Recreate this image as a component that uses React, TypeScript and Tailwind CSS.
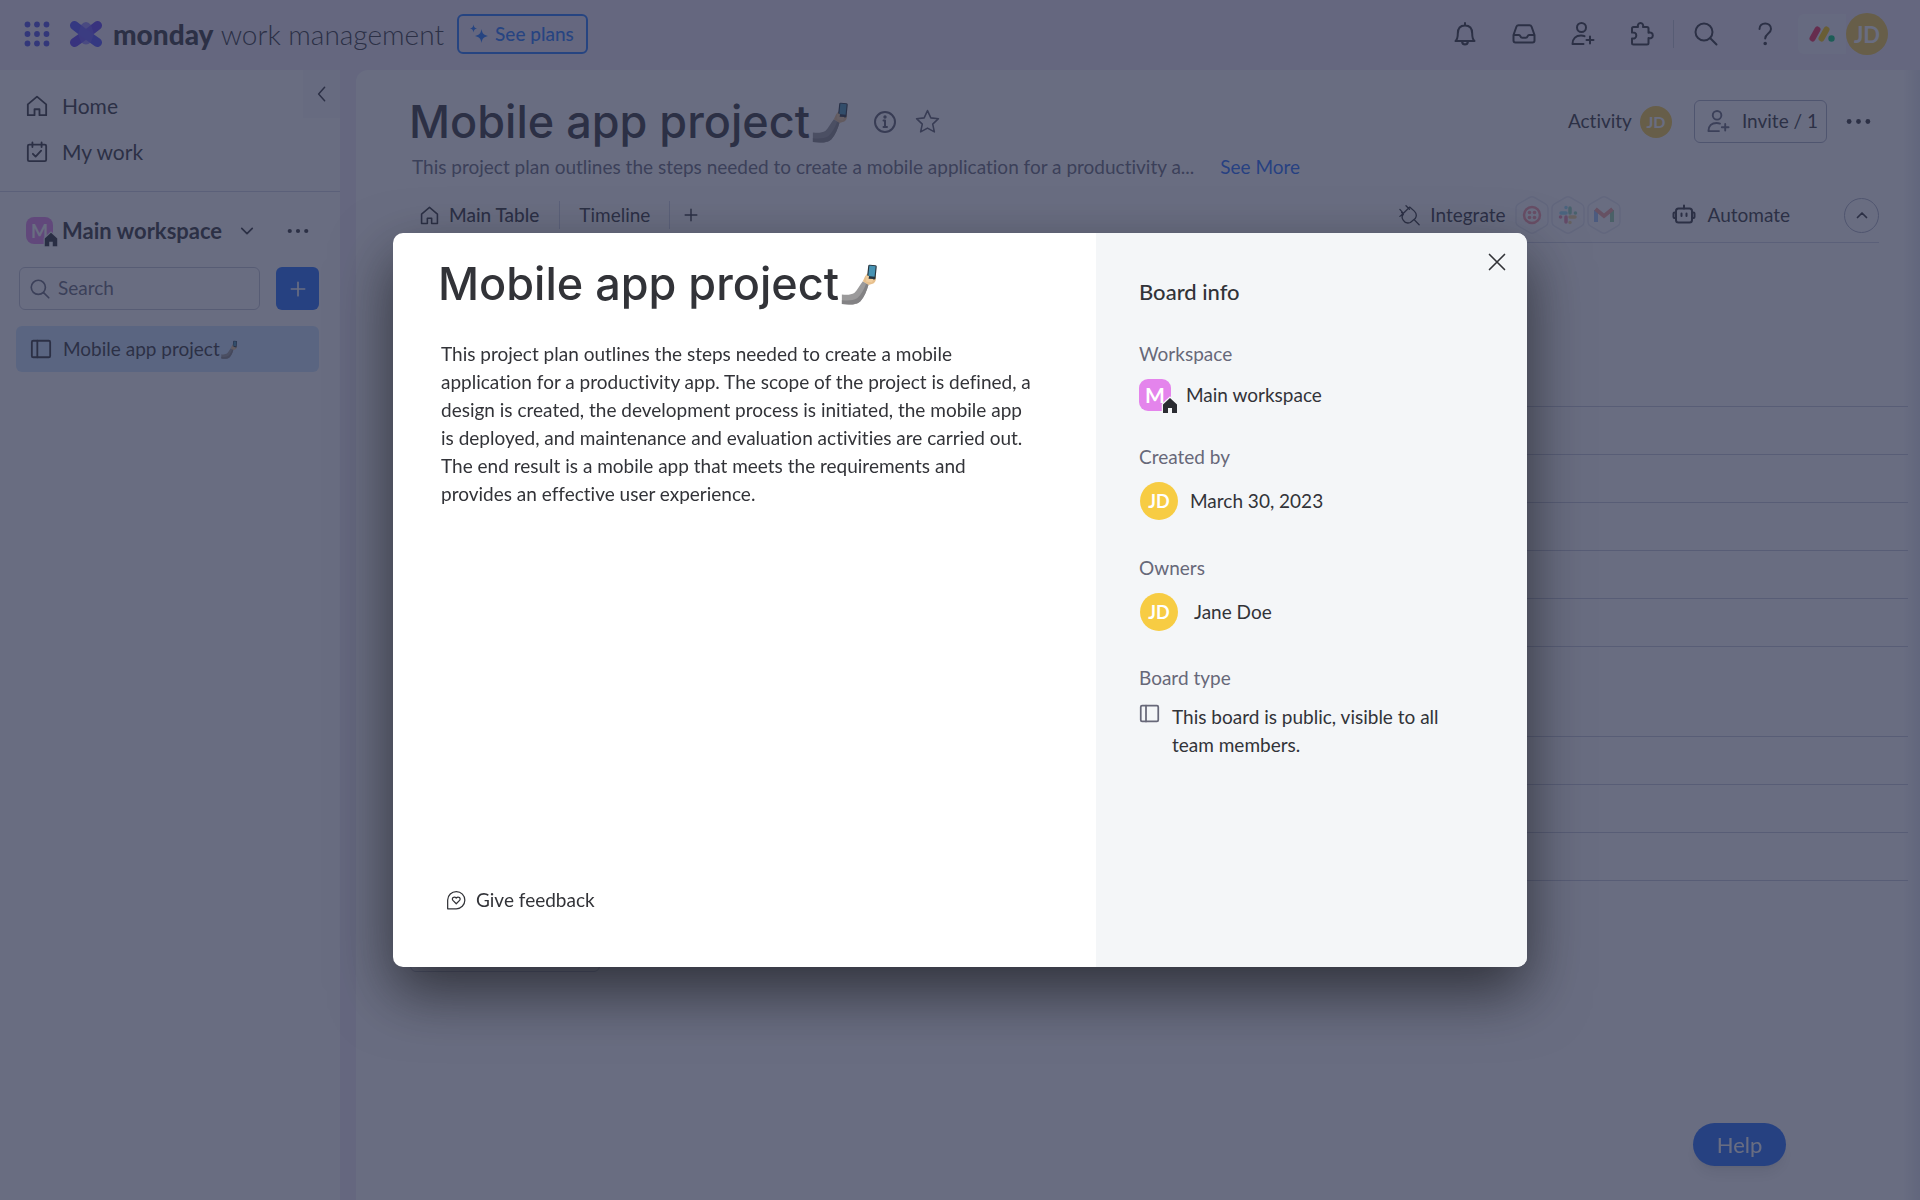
import React, { useState } from 'react';

interface IconProps {
  className?: string;
  size?: number;
  strokeWidth?: number;
  children?: React.ReactNode;
}

// All line icons share one 24px grid
const Icon: React.FC<IconProps> = ({ className = '', size = 24, strokeWidth = 2, children }) => (
  <svg
    width={size}
    height={size}
    viewBox="0 0 24 24"
    fill="none"
    stroke="currentColor"
    strokeWidth={strokeWidth}
    strokeLinecap="round"
    strokeLinejoin="round"
    className={`shrink-0 ${className}`}
    aria-hidden="true"
  >
    {children}
  </svg>
);

const HomeIcon: React.FC<IconProps> = (props) => (
  <Icon {...props}>
    <path d="M2 10.200 12 1.800l10 8.400V22h-7.300v-6.500H9.300V22H2z" />
  </Icon>
);

const MyWorkIcon: React.FC<IconProps> = (props) => (
  <Icon {...props}>
    <rect x="2" y="4" width="20" height="18" rx="1.500" />
    <path d="M7 1.500v5M17 1.500v5M7.500 14l3 3 6-6.500" />
  </Icon>
);

const BoardIcon: React.FC<IconProps> = (props) => (
  <Icon {...props}>
    <rect x="2" y="3" width="20" height="18" rx="1.500" />
    <path d="M8 3v18" />
  </Icon>
);

const SearchIcon: React.FC<IconProps> = (props) => (
  <Icon {...props}>
    <circle cx="10" cy="10" r="8.500" />
    <path d="m16.300 16.300 6.200 6.200" />
  </Icon>
);

const PersonAddIcon: React.FC<IconProps> = (props) => (
  <Icon {...props}>
    <circle cx="10.500" cy="5.500" r="4.500" />
    <path d="M12.500 22H1.500c0-5.500 3.500-8.500 8.500-8.500 1.500 0 2.500.2 3.500.7M19 14.500v7M15.500 18h7" />
  </Icon>
);

const BellIcon: React.FC<IconProps> = (props) => (
  <Icon {...props}>
    <path d="M2.500 19h19c-1.800-1.600-2.300-3.500-2.300-7.500C19.200 6.500 16.500 3.500 12 3.500s-7.200 3-7.200 8c0 4-.5 5.900-2.300 7.500zM12 3.500V1M9 19.500c.3 2 1.300 3 3 3s2.700-1 3-3" />
  </Icon>
);

const InboxIcon: React.FC<IconProps> = (props) => (
  <Icon {...props}>
    <path d="M1.500 13 4.500 4.500Q5 3.200 6.500 3.200h11q1.500 0 2 1.300l3 8.500v5.500q0 2-2 2h-17q-2 0-2-2zM1.500 13H7c.8 0 1 .4 1.300 1.200.4 1.100 1 1.600 2 1.600h3.400c1 0 1.600-.5 2-1.600.3-.8.5-1.200 1.300-1.200h5.500" />
  </Icon>
);

const PuzzleIcon: React.FC<IconProps> = (props) => (
  <Icon {...props}>
    <path d="M2 6.500q0-1.500 1.500-1.500H8C7.300 2.800 8.500 1 10.500 1S13.700 2.800 13 5h4q1.500 0 1.500 1.500v4.300c2.300-.8 4.300.4 4.300 2.600s-2 3.400-4.300 2.600v5q0 1.500-1.500 1.500H3.500Q2 22.500 2 21v-4.500c2.800.4 4.300-.9 4.300-3S4.800 10.100 2 10.500z" />
  </Icon>
);

const DotsIcon: React.FC<IconProps> = ({ size = 24 }) => (
  <svg width={size} height={size} viewBox="0 0 24 24" fill="currentColor" aria-hidden="true">
    <circle cx="3" cy="12" r="2.300" />
    <circle cx="12" cy="12" r="2.300" />
    <circle cx="21" cy="12" r="2.300" />
  </svg>
);

const SelfieEmoji: React.FC<{ size: number }> = ({ size }) => (
  <svg width={size} height={size} viewBox="0 0 40 44" className="shrink-0" role="img" aria-label="selfie">
    <path d="M1 33c5 .8 10 .4 13-1.500 3-3 5.500-8 9-12.500l6 3.500c-2 7-4.500 13-8.500 17.500C17 44 8 43.800 1 43z" fill="#9b9a9b" />
    <path d="M1 39c7 .8 12 .2 16-2 4-3.500 7-9 9.500-15.500l2.500 1c-2 7-4.500 13-8.500 17.500C17 44 8 43.800 1 43z" fill="#838284" />
    <path d="M23 19c1.500-3 2.500-6.500 5-8l8 1c1.500 3.500 1 7.500-2 9.500l-5 1.500z" fill="#e7c08d" />
    <rect x="28" y="2" width="9" height="15" rx="1.500" transform="rotate(6 32 9)" fill="#26333d" />
    <rect x="29.200" y="3" width="6.600" height="11" transform="rotate(6 32 9)" fill="#4793b3" />
    <path d="M26.500 12.500l3 1.500-.5 2.500 5 .3-1.500 3.500-6-1z" fill="#f0cd9e" />
  </svg>
);

const WorkspaceBadge: React.FC<{ large?: boolean }> = ({ large }) => (
  <span
    className={`relative flex shrink-0 items-center justify-center bg-[#e484ec] font-bold text-white ${
      large ? 'h-8 w-8 rounded-[9px] text-[21px]' : 'h-[27px] w-[27px] rounded-lg text-lg'
    }`}
  >
    M
    <svg
      viewBox="0 0 18 19"
      className={`absolute ${large ? '-right-2 -bottom-1 h-[19px] w-[18px]' : '-right-1.5 -bottom-1 h-[17px] w-4'}`}
      aria-hidden="true"
    >
      <path d="M2 8.500 9 2l7 6.500V17h-5v-5H7v5H2z" fill="#2b2c32" stroke="#f5f6f8" strokeWidth="2.500" paintOrder="stroke" />
    </svg>
  </span>
);

const Avatar: React.FC<{ className: string }> = ({ className }) => (
  <span className={`flex shrink-0 items-center justify-center rounded-full bg-[#f7cc43] font-bold text-white ${className}`}>
    JD
  </span>
);

const IconButton: React.FC<{ label: string; className?: string; children: React.ReactNode }> = ({
  label,
  className = '',
  children,
}) => (
  <button aria-label={label} className={`flex h-10 shrink-0 items-center justify-center ${className}`}>
    {children}
  </button>
);

const TopBar: React.FC = () => (
  <header className="flex h-[70px] items-center justify-between pr-8 pb-0.5 pl-6">
    <div className="flex items-center">
      <button aria-label="Product switcher" className="mr-[19px]">
        <svg width="26" height="26" viewBox="0 0 26 26" fill="#4a4ae8" aria-hidden="true">
          {[3.5, 13, 22.5].map((y) => [3.5, 13, 22.5].map((x) => <circle key={`${x}-${y}`} cx={x} cy={y} r="2.900" />))}
        </svg>
      </button>
      <svg width="34" height="28" viewBox="0 0 34 28" fill="none" strokeLinecap="round" aria-hidden="true">
        <path d="M28.500 5.500 17 14.500 5.500 22.500" stroke="#5a3df5" strokeWidth="9" />
        <path d="M5.500 5.500 17 14.500l11.500 8" stroke="#4d4dff" strokeWidth="9" />
        <path d="M12 5q5-6 10 0l3 9-3 8q-5 5-10 0l-3-8z" fill="#7060ff" fillOpacity=".7" />
      </svg>
      <p className="ml-2.5 text-[28px] whitespace-nowrap">
        <span className="font-black">monday</span> <span className="font-light">work management</span>
      </p>
      <button className="ml-[13px] flex h-10 items-center gap-1.5 rounded-md border-2 border-[#1f76ff] pr-3 pl-2.5 text-[19px] font-medium text-[#1f76ff]">
        <svg width="20" height="20" viewBox="0 0 20 20" fill="currentColor" aria-hidden="true">
          <path d="M12.500 5c.8 4.500 2 6 6.500 7-4.500 1-5.700 2.500-6.500 7-.8-4.500-2-6-6.500-7 4.500-1 5.700-2.500 6.500-7zM4.500.5C4.900 3 5.500 3.800 8 4.500 5.500 5.200 4.900 6 4.500 8.500 4.100 6 3.500 5.200 1 4.500 3.500 3.800 4.100 3 4.500.5z" />
        </svg>
        See plans
      </button>
    </div>

    <div className="flex items-center">
      <IconButton label="Notifications" className="w-[59px]"><BellIcon size={24} /></IconButton>
      <IconButton label="Inbox" className="w-[59px]"><InboxIcon size={24} /></IconButton>
      <IconButton label="Invite members" className="w-[59px]"><PersonAddIcon size={24} /></IconButton>
      <IconButton label="Apps" className="w-[59px]"><PuzzleIcon size={24} /></IconButton>
      <span className="mx-0.5 h-7 w-px bg-[#c3c6d4]" />
      <IconButton label="Search" className="w-[59px]"><SearchIcon size={24} /></IconButton>
      <IconButton label="Help center" className="w-[59px]">
        <Icon size={24}>
          <path d="M6.500 7c0-7.500 11.500-7.500 11.500 0 0 4.500-5.800 4.500-5.800 9.500" />
          <circle cx="12.200" cy="21.500" r=".8" fill="currentColor" />
        </Icon>
      </IconButton>
      <button aria-label="Profile" className="ml-1 flex items-center">
        <span className="flex h-10 w-12 items-center justify-center rounded-l-md bg-white/40">
          <svg width="26" height="16" viewBox="0 0 26 16" fill="none" strokeLinecap="round" aria-hidden="true">
            <path d="M3.500 12.500 8.500 3.500" stroke="#f62b54" strokeWidth="6" />
            <path d="M12.500 12.500l5-9" stroke="#ffcc00" strokeWidth="6" />
            <circle cx="22.500" cy="12.500" r="3.200" fill="#00ca72" />
          </svg>
        </span>
        <Avatar className="h-[42px] w-[42px] text-[22px]" />
      </button>
    </div>
  </header>
);

const Sidebar: React.FC = () => (
  <aside className="w-[340px] shrink-0 rounded-tr-lg bg-white">
    <div className="flex h-[122px] items-start border-b border-[#d0d4e4]">
      <nav className="flex-1 pt-[13px] pl-[26px]">
        <a href="#home" className="flex h-[46px] items-center gap-3.5 text-[21px]">
          <HomeIcon size={22} />
          Home
        </a>
        <a href="#my-work" className="flex h-[46px] items-center gap-3.5 text-[21px]">
          <MyWorkIcon size={22} />
          My work
        </a>
      </nav>
      <button aria-label="Collapse sidebar" className="flex h-12 w-[37px] items-center justify-center bg-[#f7f7fb]">
        <Icon size={18}><path d="m15.500 3-8 9 8 9" /></Icon>
      </button>
    </div>

    <div className="flex h-[75px] items-center pt-0.5 pr-[31px] pl-[26px]">
      <WorkspaceBadge />
      <button className="ml-[9px] flex flex-1 items-center gap-[18px] text-[22px] font-bold whitespace-nowrap">
        Main workspace
        <Icon size={14} strokeWidth={3}><path d="m3 7.500 9 9 9-9" /></Icon>
      </button>
      <button aria-label="Workspace options"><DotsIcon size={22} /></button>
    </div>

    <div className="flex items-center gap-4 pr-[21px] pl-[19px]">
      <label className="flex h-[43px] min-w-0 flex-1 items-center gap-2 rounded-md border border-[#c3c6d4] px-2.5">
        <SearchIcon size={20} className="text-[#676879]" />
        <input
          type="text"
          aria-label="Search boards"
          placeholder="Search"
          className="w-full min-w-0 bg-transparent text-[19px] outline-none placeholder:text-[#676879]"
        />
      </label>
      <button aria-label="Add item" className="flex h-[43px] w-[43px] shrink-0 items-center justify-center rounded-md bg-[#1f6bff] text-white">
        <Icon size={16} strokeWidth={2.500}><path d="M12 2v20M2 12h20" /></Icon>
      </button>
    </div>

    <a href="#board" className="mt-4 mr-[21px] ml-4 flex h-[46px] items-center rounded-md bg-[#cce5ff] pl-3.5 text-[19px]">
      <BoardIcon size={22} />
      <span className="ml-[11px]">Mobile app project</span>
      <SelfieEmoji size={19} />
    </a>
  </aside>
);

const Hexagon: React.FC<{ children: React.ReactNode }> = ({ children }) => (
  <svg width="36" height="40" viewBox="0 0 36 40" aria-hidden="true">
    <path
      d="M15.500 2.500q2.500-1.400 5 0l11 6.300q2.500 1.400 2.500 4.300v13.800q0 2.900-2.500 4.300l-11 6.300q-2.500 1.400-5 0l-11-6.300Q2 29.800 2 26.900V13.100q0-2.900 2.500-4.300z"
      fill="white"
      stroke="#e8eaf2"
      strokeWidth="1.500"
    />
    <g opacity=".5">{children}</g>
  </svg>
);

const BoardHeader: React.FC = () => (
  <>
    <div className="flex h-[43px] items-center justify-between">
      <div className="flex items-center">
        <h1 className="font-['Inter',sans-serif] text-[45px] font-medium whitespace-nowrap">Mobile app project</h1>
        <SelfieEmoji size={42} />
        <button aria-label="Board info" className="ml-[21px]">
          <Icon size={24} className="text-[#5a5b68]">
            <circle cx="12" cy="12" r="10" />
            <path d="M10.500 10.500H12V17M10.500 17h3.500" />
            <circle cx="12" cy="7" r=".7" fill="currentColor" />
          </Icon>
        </button>
        <button aria-label="Add to favorites" className="ml-[18px]">
          <Icon size={25} strokeWidth={1.500} className="text-[#5a5b68]">
            <path d="m12 1.500 3.200 7 7.300.8-5.500 5.200 1.600 7.500-6.600-3.700L5.400 22 7 14.500 1.500 9.300l7.300-.8z" />
          </Icon>
        </button>
      </div>
      <div className="flex items-center text-[19px]">
        <button className="flex items-center gap-2">
          Activity
          <Avatar className="h-8 w-8 text-base" />
        </button>
        <button className="ml-[22px] flex h-[43px] items-center gap-3 rounded-md border border-[#a9adc2] pr-2 pl-3">
          <PersonAddIcon size={23} className="text-[#676879]" />
          Invite / 1
        </button>
        <button aria-label="Board options" className="mr-2 ml-[19px]"><DotsIcon size={25} /></button>
      </div>
    </div>

    <div className="mt-2.5 flex h-7 items-center gap-[26px] text-[19px] whitespace-nowrap">
      <p className="pl-[3px] text-[#676879]">
        This project plan outlines the steps needed to create a mobile application for a productivity a...
      </p>
      <a href="#more" className="text-[#1f6bff]">See More</a>
    </div>

    <div className="mt-[7px] flex h-[55px] items-center justify-between border-b border-[#d0d4e4] text-[19px]">
      <div className="flex items-center">
        <button className="flex items-center gap-2.5 pr-5 pl-[11px] font-medium">
          <HomeIcon size={19} />
          Main Table
        </button>
        <button className="border-x border-[#d0d4e4] px-[19px]">Timeline</button>
        <button aria-label="Add view" className="pl-3.5">
          <Icon size={14} strokeWidth={2.500}><path d="M12 2v20M2 12h20" /></Icon>
        </button>
      </div>
      <div className="flex items-center">
        <button className="flex items-center gap-2.5">
          <Icon size={21} strokeWidth={1.500}>
            <path d="m4.500 10 7.500-7.500M3 8.500l2 2c-2 2-1.500 5 0 7 1.500 2.500 5 3.500 8 2.500l5.500-4.500c2-3 1-6.500-1-8.500l-5-4.500M1 5l4 4.500M8 .8l4 4M18 17.500l5 5M1 13l3.500-3" />
          </Icon>
          Integrate
          <span className="-ml-0.5 flex">
            <Hexagon>
              <circle cx="18" cy="20" r="8" fill="none" stroke="#f22f46" strokeWidth="2.500" />
              <g fill="#f22f46">
                <circle cx="15.500" cy="17.500" r="1.800" />
                <circle cx="20.500" cy="17.500" r="1.800" />
                <circle cx="15.500" cy="22.500" r="1.800" />
                <circle cx="20.500" cy="22.500" r="1.800" />
              </g>
            </Hexagon>
            <Hexagon>
              <g strokeWidth="3.500" strokeLinecap="round">
                <path d="M11 18h5M16 12.500v.1" stroke="#36c5f0" />
                <path d="M20 13v5M25.500 18h-.1" stroke="#2eb67d" />
                <path d="M20 22h5M20 27.500v-.1" stroke="#ecb22e" />
                <path d="M16 22v5M10.500 22h.1" stroke="#e01e5a" />
              </g>
            </Hexagon>
            <Hexagon>
              <g fill="none" strokeWidth="4">
                <path d="M10 27V15" stroke="#4285f4" />
                <path d="M26 27V15" stroke="#34a853" />
                <path d="m9.500 14 8.500 7 8.500-7" stroke="#ea4335" />
              </g>
            </Hexagon>
          </span>
        </button>
        <button className="ml-[50px] flex items-center gap-3">
          <Icon size={24}>
            <rect x="4" y="5.500" width="16" height="14" rx="2.500" />
            <path d="M12 5.500V2.500M4 9.500H2.500q-1 0-1 1V14q0 1 1 1H4M20 9.500h1.500q1 0 1 1V14q0 1-1 1H20M9.500 10.500v2.500M14.500 10.500v2.500" />
          </Icon>
          Automate
        </button>
        <button aria-label="Collapse header" className="ml-[54px] flex h-[35px] w-[35px] items-center justify-center rounded-full border border-[#a9adc2]">
          <Icon size={12} strokeWidth={3.500}><path d="m3 17 9-9 9 9" /></Icon>
        </button>
      </div>
    </div>
  </>
);

const RowGroup: React.FC<{ rows: number; className: string }> = ({ rows, className }) => (
  <div className={`border-t border-[#c6cadb] ${className}`}>
    {Array.from({ length: rows }, (_, i) => (
      <div key={i} className="h-12 border-b border-[#c6cadb]" />
    ))}
  </div>
);

const BoardInfoDialog: React.FC<{ onClose: () => void }> = ({ onClose }) => (
  <div className="fixed inset-0 flex items-center justify-center bg-[#292f4c]/70">
    <div
      role="dialog"
      aria-modal="true"
      aria-labelledby="board-title"
      className="flex min-h-[734px] w-full max-w-[1134px] overflow-hidden rounded-[10px] bg-white text-[19px] leading-7 shadow-[0_25px_60px_rgba(0,0,0,0.55)]"
    >
      <section className="flex flex-1 flex-col pt-6 pr-[60px] pb-[53px] pl-[45px]">
        <div className="flex h-[54px] items-center">
          <h2 id="board-title" className="font-['Inter',sans-serif] text-[45px] font-medium whitespace-nowrap">
            Mobile app project
          </h2>
          <SelfieEmoji size={42} />
        </div>
        <p className="mt-[29px] pl-[3px]">
          This project plan outlines the steps needed to create a mobile application for a productivity app. The scope
          of the project is defined, a design is created, the development process is initiated, the mobile app is
          deployed, and maintenance and evaluation activities are carried out. The end result is a mobile app that meets
          the requirements and provides an effective user experience.
        </p>
        <button className="mt-auto flex items-center gap-2.5 self-start pl-2">
          <Icon size={20} strokeWidth={1.500}>
            <path d="M2 22.500V12a10.300 10.300 0 1 1 10.300 10.500zM12.300 16.500l-4-4c-2.200-2.600 1.500-5.600 4-2.900 2.500-2.700 6.200.3 4 2.900z" />
          </Icon>
          Give feedback
        </button>
      </section>

      <section className="relative w-[431px] bg-[#f4f6f8] pt-[45px] pr-[70px] pl-[43px]">
        <button aria-label="Close" onClick={onClose} className="absolute top-[19px] right-5">
          <Icon size={20}><path d="m3 3 18 18M21 3 3 21" /></Icon>
        </button>
        <h3 className="text-[22px] font-medium">Board info</h3>

        <h4 className="mt-[34px] text-[#676879]">Workspace</h4>
        <div className="mt-[11px] flex items-center gap-[15px]">
          <WorkspaceBadge large />
          Main workspace
        </div>

        <h4 className="mt-8 text-[#676879]">Created by</h4>
        <div className="mt-[11px] flex items-center gap-3 pl-px">
          <Avatar className="h-[38px] w-[38px] text-lg" />
          March 30, 2023
        </div>

        <h4 className="mt-[34px] text-[#676879]">Owners</h4>
        <div className="mt-[11px] flex items-center gap-4 pl-px">
          <Avatar className="h-[38px] w-[38px] text-lg" />
          Jane Doe
        </div>

        <h4 className="mt-[33px] text-[#676879]">Board type</h4>
        <div className="mt-[11px] flex items-start gap-3">
          <BoardIcon size={21} className="text-[#676879]" />
          <p>This board is public, visible to all team members.</p>
        </div>
      </section>
    </div>
  </div>
);

const App: React.FC = () => {
  const [infoOpen, setInfoOpen] = useState(true);

  return (
    <div className="flex min-h-screen flex-col bg-[#f0ecf8] font-['Lato',sans-serif] text-[#323338] [font-variant-ligatures:none]">
      <TopBar />
      <div className="flex flex-1 gap-4">
        <Sidebar />
        <main className="min-w-0 flex-1 rounded-tl-xl bg-[linear-gradient(to_left,#e6e8f0,white_18px)] pt-[30px] pb-8">
          <div className="pr-[41px] pl-[53px]">
            <BoardHeader />
          </div>
          <div className="mr-3 ml-[54px]">
            <RowGroup rows={5} className="mt-[163px]" />
            <RowGroup rows={3} className="mt-[89px]" />
            <button aria-label="Add new group" className="mt-[51px] h-10 w-[190px] rounded-md border border-[#c3c6d4]" />
          </div>
        </main>
      </div>
      <button className="fixed right-[134px] bottom-[34px] h-[43px] w-[93px] rounded-full bg-[#1f6bff] text-[22px] text-white shadow-lg">
        Help
      </button>
      {infoOpen && <BoardInfoDialog onClose={() => setInfoOpen(false)} />}
    </div>
  );
};

export default App;
